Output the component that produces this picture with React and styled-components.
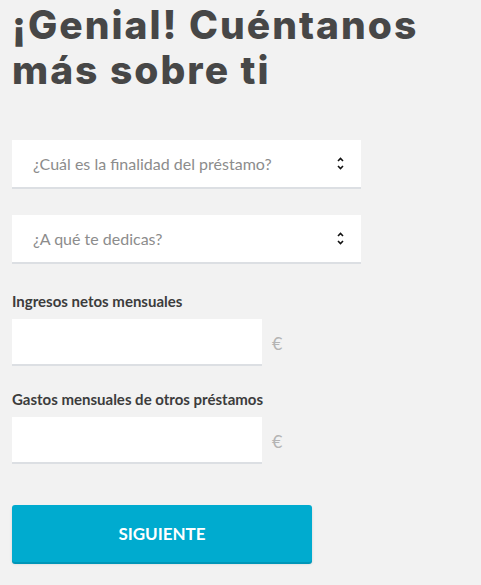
import React from 'react';
import styled, { createGlobalStyle } from 'styled-components';

const GlobalStyle = createGlobalStyle`
  html, body {
    margin: 0;
    padding: 0;
    background: #f2f2f2;
  }
  body {
    font-family: Lato, "Open Sans", Arial, sans-serif;
    color: #3c3c3c;
  }
`;

const Page = styled.div`
  width: 481px;
  min-height: 585px;
  padding: 0 12px;
  box-sizing: border-box;
  background: #f2f2f2;
  overflow: hidden;
`;

const Title = styled.h1`
  margin: 0;
  padding-top: 2px;
  font-family: Inter, "Open Sans", Arial, sans-serif;
  font-size: 39px;
  line-height: 45px;
  font-weight: 800;
  color: #474747;
  letter-spacing: 2px;
`;

const Form = styled.form`
  display: flex;
  flex-direction: column;
  margin-top: 48px;
`;

const SelectBox = styled.div`
  width: 349px;
  height: 49px;
  box-sizing: border-box;
  background: #fff;
  border-bottom: 2px solid #dcdfe3;
  display: flex;
  align-items: center;
  justify-content: space-between;
  padding: 0 17px 0 21px;
  margin-bottom: ${p => p.$gap || 26}px;
  font-size: 16px;
  color: #8c8c8c;
  cursor: pointer;
`;

const Label = styled.label`
  display: block;
  font-size: 15px;
  font-weight: 700;
  color: #3c3c3c;
  margin-bottom: 9px;
`;

const InputRow = styled.div`
  display: flex;
  align-items: center;
  gap: 10px;
  margin-bottom: ${p => p.$gap || 24}px;
`;

const Input = styled.input`
  width: 250px;
  height: 47px;
  box-sizing: border-box;
  border: none;
  border-bottom: 2px solid #dcdfe3;
  background: #fff;
  font-size: 15px;
  padding: 0 14px;
  outline: none;
`;

const Currency = styled.span`
  font-size: 18px;
  color: #b4b4b4;
`;

const Button = styled.button`
  width: 300px;
  height: 57px;
  background: #00abcf;
  border: none;
  border-radius: 3px;
  box-shadow: 0 2px 0 #0096b8, 0 2px 3px rgba(0, 0, 0, 0.12);
  color: #fff;
  font-family: inherit;
  font-size: 17px;
  font-weight: 700;
  cursor: pointer;
`;

const Chevrons = () => (
  <svg width="7" height="13" viewBox="0 0 7 13" fill="none" stroke="#111" strokeWidth="1.6">
    <path d="M1 4 L3.5 1.5 L6 4" />
    <path d="M1 9 L3.5 11.5 L6 9" />
  </svg>
);

const App = () => (
  <>
    <GlobalStyle />
    <Page>
      <Title>¡Genial! Cuéntanos<br />más sobre ti</Title>
      <Form onSubmit={e => e.preventDefault()}>
        <SelectBox>
          <span>¿Cuál es la finalidad del préstamo?</span>
          <Chevrons />
        </SelectBox>
        <SelectBox $gap={28}>
          <span>¿A qué te dedicas?</span>
          <Chevrons />
        </SelectBox>
        <Label>Ingresos netos mensuales</Label>
        <InputRow>
          <Input type="text" />
          <Currency>€</Currency>
        </InputRow>
        <Label>Gastos mensuales de otros préstamos</Label>
        <InputRow $gap={41}>
          <Input type="text" />
          <Currency>€</Currency>
        </InputRow>
        <Button type="submit">SIGUIENTE</Button>
      </Form>
    </Page>
  </>
);

export default App;
